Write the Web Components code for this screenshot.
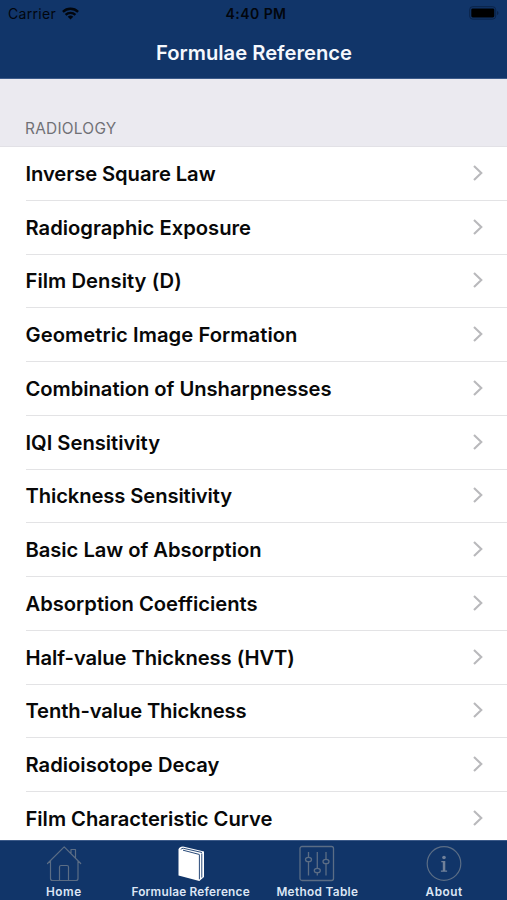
<!DOCTYPE html>
<html lang="en">
<head>
<meta charset="utf-8">
<title>Formulae Reference</title>
<style>
html,body{margin:0;height:900px;overflow:hidden;background:#fff;font-family:Inter,"Liberation Sans",sans-serif}
</style>
</head>
<body>
<formula-app></formula-app>
<script>
// A single line of text whose tracking is adjusted to span a given width.
class FitLabel extends HTMLElement {
  connectedCallback() {
    if (this.shadowRoot) return;
    const root = this.attachShadow({mode: 'open'});
    root.innerHTML = `<style>:host{display:block;white-space:nowrap}span{display:inline-block}</style><span></span>`;
    const span = root.querySelector('span');
    const text = this.getAttribute('text');
    span.textContent = text;
    const target = parseFloat(this.getAttribute('span'));
    const spacing = (target - span.getBoundingClientRect().width) / text.length;
    span.style.letterSpacing = spacing.toFixed(3) + 'px';
  }
}

class StatusBar extends HTMLElement {
  constructor() {
    super();
    this.attachShadow({mode: 'open'}).innerHTML = `
<style>
:host{display:grid;grid-template-columns:1fr auto 1fr;align-items:center;height:27px;padding:0 8px 0 8px;box-sizing:border-box;color:#02060d;font-size:14px}
.left{display:flex;align-items:center;gap:6px}
.time{font-weight:600;font-size:14px;margin-left:5px}
.right{justify-self:end;display:block}
svg{display:block;margin-bottom:1px}
</style>
<div class="left"><fit-label text="Carrier" span="48"></fit-label>
<svg width="17" height="13" viewBox="0 0 17 13"><g fill="none" stroke="#02060d" stroke-width="2.3"><path d="M.9 4.9a10.8 10.8 0 0 1 15.2 0"/><path d="M3.6 7.9a7 7 0 0 1 9.8 0"/></g><path d="M8.5 12.6L5.7 9.8a4 4 0 0 1 5.6 0z" fill="#02060d"/></svg></div>
<fit-label class="time" text="4:40 PM" span="61"></fit-label>
<svg class="right" width="30" height="14" viewBox="0 0 30 14"><rect x=".7" y=".7" width="26" height="12.4" rx="3" fill="none" stroke="#0b2348" stroke-width="1"/><rect x="2.3" y="2.4" width="23" height="9" rx="1.4" fill="#000"/><path d="M28 5v4q1.5-.6 1.5-2T28 5" fill="#0b2348"/></svg>`;
  }
}

class NavBar extends HTMLElement {
  constructor() {
    super();
    this.attachShadow({mode: 'open'}).innerHTML = `
<style>
:host{display:flex;flex-direction:column;height:79px;box-sizing:border-box;background:#113569;border-bottom:1px solid #3c5a89}
.title{display:flex;justify-content:center;align-items:center;height:50px;padding-left:1px;color:#f5f8fd;font-size:20.2px;font-weight:600}
</style>
<status-bar></status-bar><div class="title"><slot></slot></div>`;
  }
}

class SectionHeader extends HTMLElement {
  constructor() {
    super();
    this.attachShadow({mode: 'open'}).innerHTML = `
<style>
:host{display:flex;align-items:flex-end;height:68px;box-sizing:border-box;padding:0 0 7px 25px;background:#ebeaf0;border-bottom:1px solid #e2e1e6;color:#717176;font-size:15.4px;line-height:20px}
</style><slot></slot>`;
  }
}

class FormulaRow extends HTMLElement {
  connectedCallback() {
    if (this.shadowRoot) return;
    this.attachShadow({mode: 'open'}).innerHTML = `
<style>
:host{display:block;flex:none;height:53.75px;padding-left:25.5px;box-sizing:border-box}
.row{height:100%;box-sizing:border-box;display:flex;align-items:center;justify-content:space-between;padding-right:23.5px;border-bottom:1px solid #e3e3e5;color:#080808;font-size:20.2px;font-weight:600}
svg{display:block;margin-bottom:1px}
</style>
<div class="row"><fit-label text="${this.getAttribute('label')}" span="${this.getAttribute('span')}"></fit-label>
<svg width="12" height="18" viewBox="0 0 12 18"><path d="M2 2l7.3 7L2 16" fill="none" stroke="#b9b9bc" stroke-width="2.1"/></svg></div>`;
  }
}

const ICONS = {
  home: `<g fill="none" stroke="#5b6d85" stroke-width="1.2" stroke-linejoin="round" stroke-linecap="round"><path d="M1.500 18.500L18.200 1.800l16.500 16.700M4.500 16v17.500q0 2 2 2h23.500q2 0 2-2V16M25 8V4.500h4.500V12.500M13.500 35.500V22q0-1.500 1.500-1.500h6q1.500 0 1.500 1.500v13.500"/></g>`,
  book: `<path d="M5.500 4.500Q6 2 10 1.600L31 6.500v25.500l-4.700 4L5.500 30.500z" fill="#fff"/><g fill="none" stroke="#113569" stroke-width=".9"><path d="M8 4.600Q8.200 3 10.500 3.300L29 7.500M10 5.200l16.500 4.300M26.400 9.800v24.500M28.800 8.500v24"/></g>`,
  sliders: `<g fill="none" stroke="#5b6d85" stroke-width="1.3"><rect x="1" y="1.500" width="33.500" height="34" rx="2"/><path d="M9.500 7v5M9.500 17v13.500M18.300 7v16M18.300 28v2.500M27 7v7.500M27 18.500v12"/><ellipse cx="9.500" cy="14.500" rx="3" ry="2.200"/><ellipse cx="18.300" cy="25.500" rx="3" ry="2.200"/><ellipse cx="27" cy="16.500" rx="3" ry="2.200"/></g>`,
  info: `<circle cx="18" cy="18.500" r="16.800" fill="none" stroke="#5b6d85" stroke-width="1.200"/><circle cx="18" cy="12.500" r="1.800" fill="#71819a"/><path d="M15.300 16h4v9.500h1.800v1.200h-6.200v-1.200h1.900v-8.300h-1.500z" fill="#71819a"/>`
};

class TabItem extends HTMLElement {
  connectedCallback() {
    if (this.shadowRoot) return;
    this.attachShadow({mode: 'open'}).innerHTML = `
<style>
:host{display:flex;flex-direction:column;align-items:center;padding:4px 0 0 1px;color:#dce6f5;font-size:11.8px;font-weight:600;line-height:15px;min-width:0}
svg{display:block;margin-bottom:3px}
</style>
<svg width="36" height="37" viewBox="0 0 36 37">${ICONS[this.getAttribute('icon')]}</svg>
<fit-label text="${this.getAttribute('label')}" span="${this.getAttribute('span')}"></fit-label>`;
  }
}

class TabBar extends HTMLElement {
  constructor() {
    super();
    this.attachShadow({mode: 'open'}).innerHTML = `
<style>
:host{display:grid;grid-template-columns:repeat(4,1fr);height:60px;box-sizing:border-box;background:#113569;border-top:1px solid #3c5a89}
</style><slot></slot>`;
  }
}

class FormulaApp extends HTMLElement {
  constructor() {
    super();
    const rows = [
      ['Inverse Square Law', 190], ['Radiographic Exposure', 225.500], ['Film Density (D)', 156],
      ['Geometric Image Formation', 272], ['Combination of Unsharpnesses', 306], ['IQI Sensitivity', 134.500],
      ['Thickness Sensitivity', 206.500], ['Basic Law of Absorption', 236], ['Absorption Coefficients', 232],
      ['Half-value Thickness (HVT)', 269], ['Tenth-value Thickness', 221], ['Radioisotope Decay', 194],
      ['Film Characteristic Curve', 247]
    ];
    this.attachShadow({mode: 'open'}).innerHTML = `
<style>
:host{display:flex;flex-direction:column;width:507px;height:900px;overflow:hidden}
main{flex:1;min-height:0;overflow:hidden;display:flex;flex-direction:column;background:#fff}
section-header{flex:none}
</style>
<nav-bar><fit-label text="Formulae Reference" span="196"></fit-label></nav-bar>
<main><section-header><fit-label text="RADIOLOGY" span="91.500"></fit-label></section-header>
${rows.map(([t, w]) => `<formula-row label="${t}" span="${w}"></formula-row>`).join('')}</main>
<tab-bar>
<tab-item icon="home" label="Home" span="36"></tab-item>
<tab-item icon="book" label="Formulae Reference" span="118.500"></tab-item>
<tab-item icon="sliders" label="Method Table" span="82"></tab-item>
<tab-item icon="info" label="About" span="37"></tab-item>
</tab-bar>`;
  }
}

customElements.define('fit-label', FitLabel);
customElements.define('status-bar', StatusBar);
customElements.define('nav-bar', NavBar);
customElements.define('section-header', SectionHeader);
customElements.define('formula-row', FormulaRow);
customElements.define('tab-item', TabItem);
customElements.define('tab-bar', TabBar);
customElements.define('formula-app', FormulaApp);
</script>
</body>
</html>
